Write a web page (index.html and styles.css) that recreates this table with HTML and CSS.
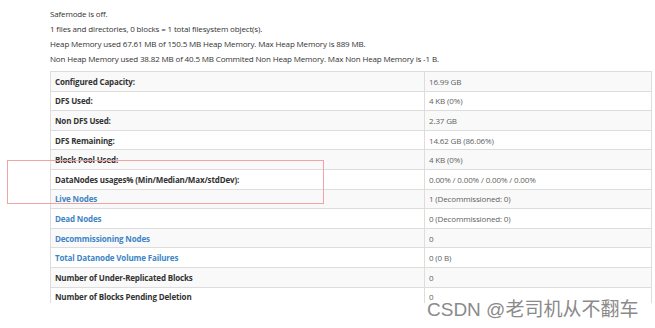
FILE: index.html
```html
<!DOCTYPE html>
<html>
<head>
<meta charset="utf-8">
<link rel="stylesheet" href="styles.css">
</head>
<body>
<div class="page">
  <div class="info">
    <p>Safemode is off.</p>
    <p>1 files and directories, 0 blocks = 1 total filesystem object(s).</p>
    <p>Heap Memory used 67.61 MB of 150.5 MB Heap Memory. Max Heap Memory is 889 MB.</p>
    <p>Non Heap Memory used 38.82 MB of 40.5 MB Commited Non Heap Memory. Max Non Heap Memory is -1 B.</p>
  </div>
  <div class="clip">
    <table class="summary">
      <tr><th>Configured Capacity:</th><td>16.99 GB</td></tr>
      <tr><th>DFS Used:</th><td>4 KB (0%)</td></tr>
      <tr><th>Non DFS Used:</th><td>2.37 GB</td></tr>
      <tr><th>DFS Remaining:</th><td>14.62 GB (86.06%)</td></tr>
      <tr><th>Block Pool Used:</th><td>4 KB (0%)</td></tr>
      <tr><th>DataNodes usages% (Min/Median/Max/stdDev):</th><td>0.00% / 0.00% / 0.00% / 0.00%</td></tr>
      <tr><th><a href="#">Live Nodes</a></th><td>1 (Decommissioned: 0)</td></tr>
      <tr><th><a href="#">Dead Nodes</a></th><td>0 (Decommissioned: 0)</td></tr>
      <tr><th><a href="#">Decommissioning Nodes</a></th><td>0</td></tr>
      <tr><th><a href="#">Total Datanode Volume Failures</a></th><td>0 (0 B)</td></tr>
      <tr><th>Number of Under-Replicated Blocks</th><td>0</td></tr>
      <tr><th>Number of Blocks Pending Deletion</th><td>0</td></tr>
    </table>
  </div>
  <div class="mark"></div>
  <div class="watermark">CSDN @老司机从不翻车</div>
</div>
</body>
</html>
```
FILE: styles.css
```css
html, body {
  margin: 0;
  padding: 0;
  background: #fff;
}
.page {
  position: relative;
  width: 655px;
  height: 328px;
  overflow: hidden;
  font-family: "Open Sans", "Noto Sans", sans-serif;
  font-size: 8px;
  letter-spacing: -0.15px;
  color: #333;
}
.info {
  padding: 6px 0 0 50px;
}
.info p {
  margin: 0;
  line-height: 15px;
}
.clip {
  margin: 5px 0 0 50px;
  width: 603px;
  height: 232px;
  overflow: hidden;
}
.summary {
  border-collapse: collapse;
  width: 602px;
  border: 1px solid #ddd;
}
.summary tr:nth-child(odd) {
  background: #f9f9f9;
}
.summary th, .summary td {
  height: 19.6px;
  padding: 0 0 0 4px;
  border-top: 1px solid #ddd;
  text-align: left;
  vertical-align: middle;
  box-sizing: border-box;
}
.summary th {
  width: 374px;
  font-weight: 700;
  color: #333;
}
.summary td {
  border-left: 1px solid #ddd;
  color: #5f5f5f;
}
.summary a {
  color: #3d85c6;
  text-decoration: none;
}
.mark {
  position: absolute;
  left: 7px;
  top: 160px;
  width: 315px;
  height: 42px;
  border: 1px solid #f2a3a3;
}
.watermark {
  position: absolute;
  left: 427px;
  top: 299px;
  font-family: "Liberation Sans", "Noto Sans CJK SC", sans-serif;
  font-size: 19px;
  line-height: 22px;
  letter-spacing: 0;
  color: #8a8a8a;
  text-shadow: 0 0 2px #fff;
}
```
